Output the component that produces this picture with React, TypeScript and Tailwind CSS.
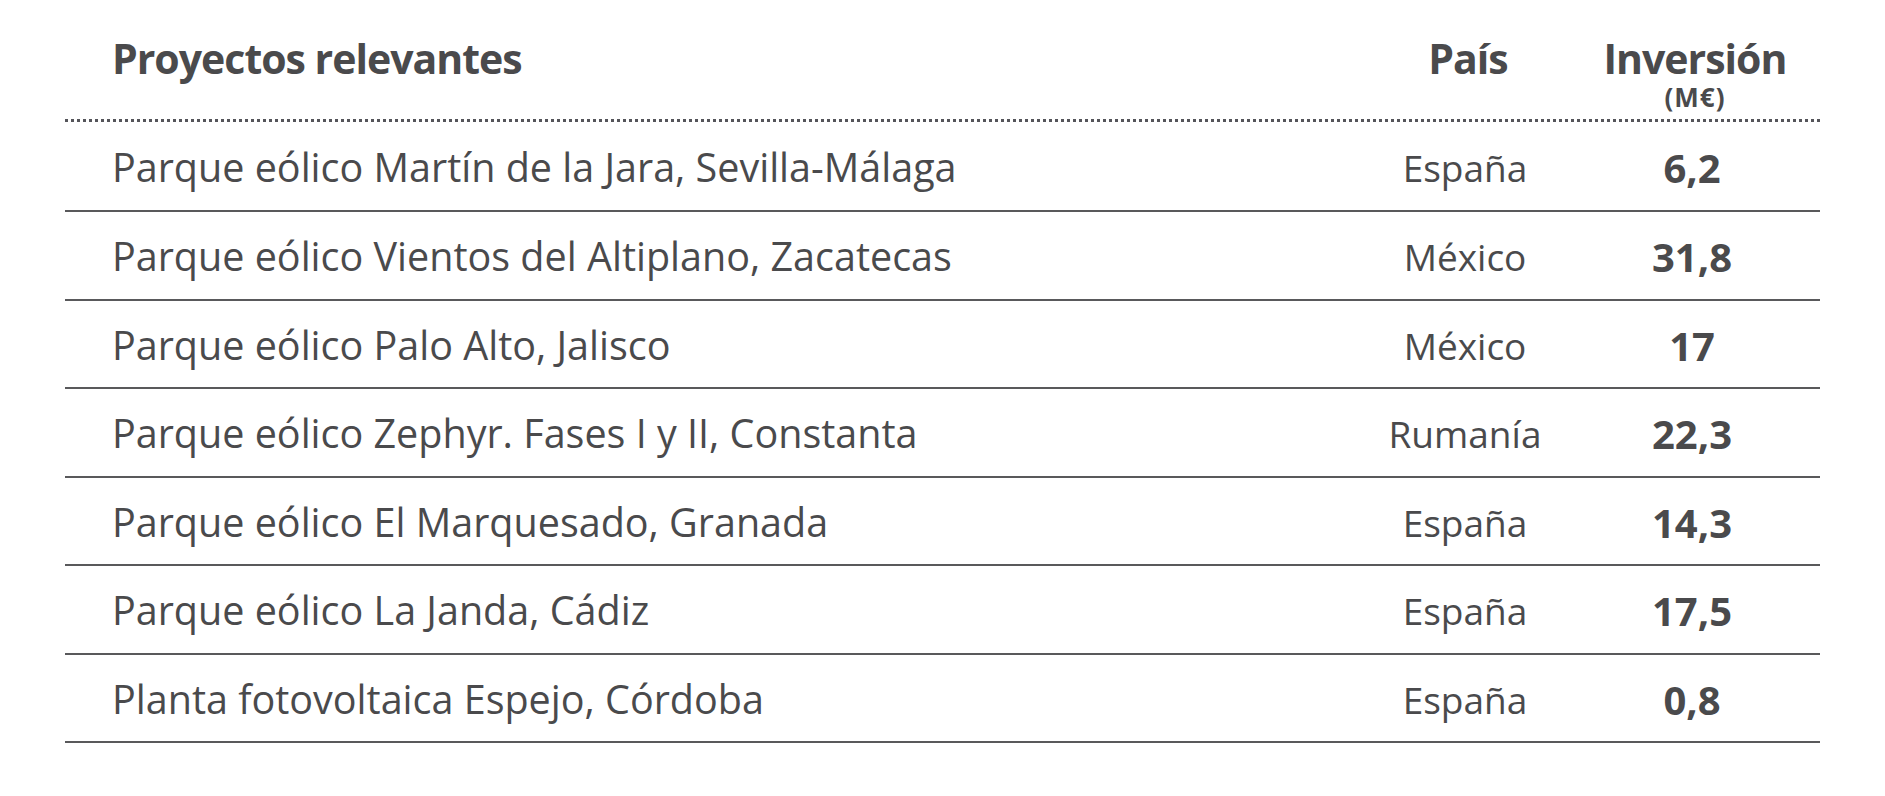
const rows: [string, string, string][] = [
  ['Parque eólico Martín de la Jara, Sevilla-Málaga', 'España', '6,2'],
  ['Parque eólico Vientos del Altiplano, Zacatecas', 'México', '31,8'],
  ['Parque eólico Palo Alto, Jalisco', 'México', '17'],
  ['Parque eólico Zephyr. Fases I y II, Constanta', 'Rumanía', '22,3'],
  ['Parque eólico El Marquesado, Granada', 'España', '14,3'],
  ['Parque eólico La Janda, Cádiz', 'España', '17,5'],
  ['Planta fotovoltaica Espejo, Córdoba', 'España', '0,8'],
]

export default function App() {
  return (
    <div className="min-h-[796px] w-full bg-white px-[65px] font-['Open_Sans',sans-serif] text-[#4a4a4c]">
      {/* Header */}
      <div className="flex h-[122px] border-b-[3px] border-dotted border-[#55555a] pt-[38px] font-bold leading-none">
        <div className="flex-1 pl-[47px] text-[41px] tracking-[-1px]">Proyectos relevantes</div>
        <div className="w-[220px] pl-[6px] text-center text-[41px] tracking-[-1px]">País</div>
        <div className="flex w-[234px] flex-col items-center pl-[6px]">
          <span className="text-[41px] tracking-[-1px]">Inversión</span>
          <span className="mt-[5px] text-[26px] tracking-[1px]">(M€)</span>
        </div>
        <div className="w-[11px]" />
      </div>

      {/* Rows */}
      {rows.map(([name, country, amount], i) => (
        <div
          key={name}
          className={`flex border-b-2 border-[#59595b] leading-none ${i === 0 ? 'h-[90px] pt-[26px]' : 'h-[88.5px] pt-[25px]'}`}
        >
          <div className="flex-1 pl-[47px] text-[39.5px]">{name}</div>
          <div className="w-[220px] pt-[1px] text-center text-[37px]">{country}</div>
          <div className="w-[234px] text-center text-[40px] font-bold">{amount}</div>
          <div className="w-[11px]" />
        </div>
      ))}
    </div>
  )
}
